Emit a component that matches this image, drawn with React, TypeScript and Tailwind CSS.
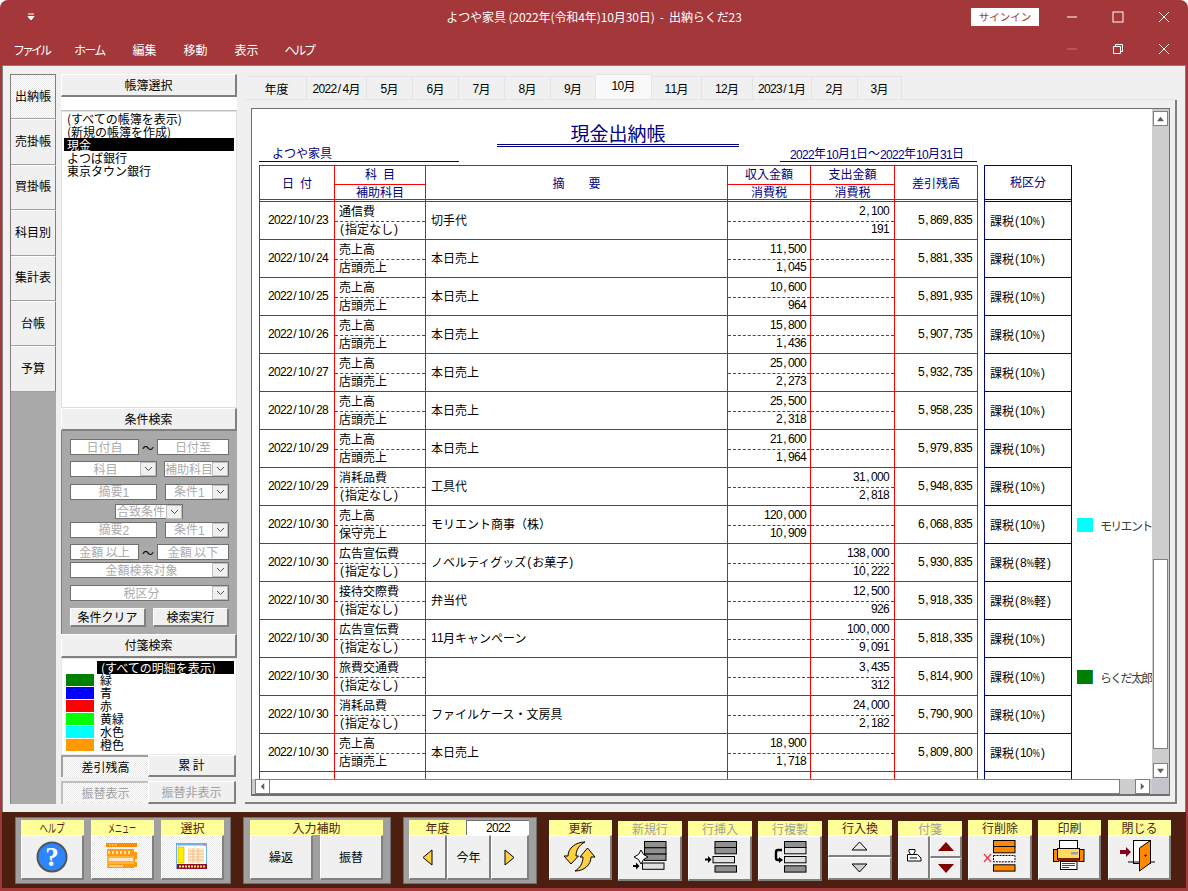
import React from "react";

const Txt = ({ s }: { s: string }) => (
  <>
    {s.split(/([0-9/,%()]+)/).map((p, i) =>
      /^[0-9/,%()]+$/.test(p) ? (
        <span key={i} className="font-['Liberation_Sans',sans-serif]">
          {p.split("").map((c, j) => (
            <span key={j} className={`inline-block text-center translate-y-[1px] ${c === "%" ? "w-[8px] text-[10px] scale-x-[.8]" : "w-[6px] text-[12px]"}`}>{c}</span>
          ))}
        </span>
      ) : (
        <span key={i}>{p}</span>
      )
    )}
  </>
);

const bevel = "border border-t-white border-l-white border-r-2 border-b-2 border-r-[#808080] border-b-[#808080] bg-[#f0f0f0]";
const dither = "bg-[repeating-conic-gradient(#ffffff_0_25%,#e8e8e8_0_50%)] bg-[length:2px_2px]";

const Tri = ({ dir, c = "#606060", s = 7 }: { dir: "u" | "d" | "l" | "r"; c?: string; s?: number }) => {
  const p = { u: "0,7 4,2 8,7", d: "0,2 8,2 4,7", l: "6,0 6,8 2,4", r: "2,0 2,8 6,4" }[dir];
  return (
    <svg width={s} height={s} viewBox="0 0 8 8"><polygon points={p} fill={c} /></svg>
  );
};

const tabs: [string, number][] = [["年度", 60], ["2022/4月", 60], ["5月", 46], ["6月", 46], ["7月", 46], ["8月", 46], ["9月", 45], ["10月", 56], ["11月", 50], ["12月", 51], ["2023/1月", 59], ["2月", 46], ["3月", 44]];

type R = [string, string, string, string, string, string, string, string, string, string, number?];
const rows: R[] = [
  ["2022/10/23", "通信費", "(指定なし)", "切手代", "", "", "2,100", "191", "5,869,835", "課税(10%)"],
  ["2022/10/24", "売上高", "店頭売上", "本日売上", "11,500", "1,045", "", "", "5,881,335", "課税(10%)"],
  ["2022/10/25", "売上高", "店頭売上", "本日売上", "10,600", "964", "", "", "5,891,935", "課税(10%)"],
  ["2022/10/26", "売上高", "店頭売上", "本日売上", "15,800", "1,436", "", "", "5,907,735", "課税(10%)"],
  ["2022/10/27", "売上高", "店頭売上", "本日売上", "25,000", "2,273", "", "", "5,932,735", "課税(10%)"],
  ["2022/10/28", "売上高", "店頭売上", "本日売上", "25,500", "2,318", "", "", "5,958,235", "課税(10%)"],
  ["2022/10/29", "売上高", "店頭売上", "本日売上", "21,600", "1,964", "", "", "5,979,835", "課税(10%)"],
  ["2022/10/29", "消耗品費", "(指定なし)", "工具代", "", "", "31,000", "2,818", "5,948,835", "課税(10%)"],
  ["2022/10/30", "売上高", "保守売上", "モリエント商事（株）", "120,000", "10,909", "", "", "6,068,835", "課税(10%)", 1],
  ["2022/10/30", "広告宣伝費", "(指定なし)", "ノベルティグッズ(お菓子)", "", "", "138,000", "10,222", "5,930,835", "課税(8%軽)"],
  ["2022/10/30", "接待交際費", "(指定なし)", "弁当代", "", "", "12,500", "926", "5,918,335", "課税(8%軽)"],
  ["2022/10/30", "広告宣伝費", "(指定なし)", "11月キャンペーン", "", "", "100,000", "9,091", "5,818,335", "課税(10%)"],
  ["2022/10/30", "旅費交通費", "(指定なし)", "", "", "", "3,435", "312", "5,814,900", "課税(10%)", 2],
  ["2022/10/30", "消耗品費", "(指定なし)", "ファイルケース・文房具", "", "", "24,000", "2,182", "5,790,900", "課税(10%)"],
  ["2022/10/30", "売上高", "店頭売上", "本日売上", "18,900", "1,718", "", "", "5,809,800", "課税(10%)"],
];

const grid = "grid grid-cols-[75px_91px_302px_83px_84px_83px] w-[719px] shrink-0 border-l border-[#ff0000]";
const cell = "border-r border-b border-[#ff0000] flex items-center pb-[2px]";
const dash = "border-b border-dashed border-[#ff0000]";

const Split = ({ a, b, right, pr }: { a: string; b: string; right?: boolean; pr?: string }) => (
  <div className="border-r border-b border-[#ff0000] flex flex-col">
    <div className={`h-[20px] flex items-center ${dash} ${right ? "justify-end pb-[2px]" : "pl-[4px] pb-[2px]"} ${pr ?? ""} shrink-0`}><Txt s={a} /></div>
    <div className={`h-[17px] flex items-center ${right ? "justify-end pb-[4px]" : "pl-[4px] pb-[4px]"} ${pr ?? ""}`}><Txt s={b} /></div>
  </div>
);

const Row = ({ r }: { r: R }) => (
  <div className="flex h-[38px] shrink-0">
    <div className={grid}>
      <div className={`${cell} justify-center pl-[2px]`}><Txt s={r[0]} /></div>
      <Split a={r[1]} b={r[2]} />
      <div className={`${cell} pl-[5px]`}><Txt s={r[3]} /></div>
      <Split a={r[4]} b={r[5]} right pr="pr-[4px]" />
      <Split a={r[6]} b={r[7]} right pr="pr-[5px]" />
      <div className={`${cell} justify-end pr-[5px]`}><Txt s={r[8]} /></div>
    </div>
    <div className="ml-[6px] w-[88px] shrink-0 border-x border-b border-[#000080] flex items-center pl-[5px] whitespace-nowrap"><Txt s={r[9]} /></div>
    {r[10] ? (
      <div className="ml-[5px] flex items-center w-[75px] shrink-0 overflow-hidden whitespace-nowrap text-[#404040]">
        <div className={`w-[16px] h-[14px] shrink-0 ${r[10] === 1 ? "bg-[#00ffff]" : "bg-[#008000] border-r border-[#008b8b]"}`} />
        <span className="ml-[7px] tracking-[-1.7px]">{r[10] === 1 ? "モリエント商事" : "らくだ太郎"}</span>
      </div>
    ) : null}
  </div>
);

const Field = ({ t, w, h = "h-[16px]", ml = "", arrow, cls = "" }: { t: string; w: string; h?: string; ml?: string; arrow?: boolean; cls?: string }) => (
  <div className={`${w} ${h} ${ml} ${cls} bg-white border border-[#707070] text-[#ababab] flex items-center`}>
    <span className="flex-1 min-w-0 text-center whitespace-nowrap overflow-hidden pb-[2px]"><Txt s={t} /></span>
    {arrow ? (
      <span className="w-[16px] h-[14px] shrink-0 bg-[#f0f0f0] border border-[#c0c0c0] flex items-center justify-center">
        <svg width="9" height="6" viewBox="0 0 9 6"><path d="M1 1l3.5 3.5L8 1" fill="none" stroke="#505050" /></svg>
      </span>
    ) : null}
  </div>
);

const Lbl = ({ t, off, w = "", nar = "" }: { t: string; off?: boolean; w?: string; nar?: string }) => (
  <div className={`${w} h-[15px] shrink-0 bg-[#ffff99] flex items-center justify-center ${off ? "text-[#a0a0a0]" : "text-[#4d1f10]"}`}>
    <span className={`inline-block ${nar}`}>{t}</span>
  </div>
);

const Tool = ({ t, off, w, ml, top = "mt-[9px]", children }: { t: string; off?: boolean; w: string; ml: string; top?: string; children: React.ReactNode }) => (
  <div className={`${w} ${ml} ${top} flex flex-col shrink-0`}>
    <Lbl t={t} off={off} />
    <div className={`${bevel} flex-1 h-[44px] flex items-center justify-center overflow-hidden`}>{children}</div>
  </div>
);

const gr = "#909090";
const Box = ({ x, y, w = 21.5, h = 6.3, f = gr }: { x: number; y: number; w?: number; h?: number; f?: string }) => (
  <rect x={x + 0.5} y={y + 0.5} width={w} height={h} fill={f} stroke="#000" />
);
const Arr = ({ x, y }: { x: number; y: number }) => (
  <path d={`M${x - 3} ${y - 1}h3v-2.5l3.5 3.5-3.5 3.5v-2.5h-3z`} fill="#000" />
);
const Svg = ({ children }: { children: React.ReactNode }) => (
  <svg width="60" height="42" viewBox="0 0 60 42" className="shrink-0">{children}</svg>
);

const Mid = ({ t, cls = "" }: { t: string; cls?: string }) => (
  <div className={`${bevel} ${cls} flex items-center justify-center pb-[2px]`}><Txt s={t} /></div>
);

const hd = "border-r border-[#ff0000] flex items-center justify-center pb-[3px]";
const hdTop = "h-[19px] border-b border-[#ff0000] flex items-center justify-center pb-[3px]";
const hdBot = "flex-1 flex items-center justify-center pb-[3px]";

export default function App() {
  return (
    <div className="w-[1188px] h-[891px] bg-[#a4373a] flex flex-col overflow-hidden rounded-t-[8px] font-['Noto_Sans_CJK_JP','Liberation_Sans',sans-serif] text-[12px] leading-[13px] text-black">
      {/* Title */}
      <div className="h-[33px] shrink-0 grid grid-cols-[1fr_auto_1fr] items-center text-white">
        <div className="pl-[27px]">
          <svg width="8" height="8" viewBox="0 0 8 8"><path d="M1 1h6M1 3.5h6L4 7z" stroke="#fff" fill="#fff" strokeWidth="1" /></svg>
        </div>
        <div className="whitespace-pre tracking-[-0.1px]">よつや家具 (2022年(令和4年)10月30日)  -  出納らくだ23</div>
        <div className="flex items-center justify-end pr-[1px]">
          <div className="w-[68px] h-[18px] bg-white text-[#a4373a] text-[10.5px] flex items-center justify-center mr-[10px]">サインイン</div>
          <div className="w-[46px] flex justify-center"><svg width="12" height="12" viewBox="0 0 12 12"><path d="M1 6h10" stroke="#fff" /></svg></div>
          <div className="w-[46px] flex justify-center"><svg width="12" height="12" viewBox="0 0 12 12"><rect x="1" y="1" width="10" height="10" fill="none" stroke="#fff" /></svg></div>
          <div className="w-[46px] flex justify-center"><svg width="12" height="12" viewBox="0 0 12 12"><path d="M1 1l10 10M11 1L1 11" stroke="#fff" /></svg></div>
        </div>
      </div>
      {/* Menu */}
      <div className="h-[32px] shrink-0 flex items-center pl-[13px] text-white">
        <span className="tracking-[-3px]">ファイル</span>
        <span className="ml-[25px] tracking-[-1.7px]">ホーム</span>
        <span className="ml-[28px]">編集</span>
        <span className="ml-[27px]">移動</span>
        <span className="ml-[27px]">表示</span>
        <span className="ml-[26px] tracking-[-2.3px]">ヘルプ</span>
        <div className="ml-auto flex items-center pr-[1px]">
          <div className="w-[46px] flex justify-center"><svg width="12" height="12" viewBox="0 0 12 12"><path d="M1 6h10" stroke="#d87070" /></svg></div>
          <div className="w-[46px] flex justify-center"><svg width="12" height="12" viewBox="0 0 12 12"><path d="M3.5 3V1.5h7v7H9M1.5 3.5h7v7h-7z" fill="none" stroke="#fff" /></svg></div>
          <div className="w-[46px] flex justify-center"><svg width="12" height="12" viewBox="0 0 12 12"><path d="M1 1l10 10M11 1L1 11" stroke="#fff" /></svg></div>
        </div>
      </div>
      {/* Body */}
      <div className="h-[747px] shrink-0 mx-[2px] bg-[#f0f0f0] border-t border-x border-[#808080] pl-[7px] pt-[8px] flex">
        {/* Side tabs */}
        <div className="w-[46px] h-[730px] bg-[#a9a9a9] border-l border-[#808080] flex flex-col shrink-0">
          {["出納帳", "売掛帳", "買掛帳", "科目別", "集計表", "台帳", "予算"].map((t, i) => (
            <div key={t} className={`h-[45.4px] shrink-0 flex items-center justify-center pb-[3px] border-b border-r border-b-[#a0a0a0] border-r-[#808080] border-t ${i === 0 ? `${dither} border-t-[#808080]` : "bg-[#f0f0f0] border-t-white"}`}>{t}</div>
          ))}
        </div>
        {/* Middle */}
        <div className="w-[176px] ml-[5px] h-[730px] flex flex-col shrink-0">
          <Mid t="帳簿選択" cls="h-[23px]" />
          <div className="h-[14px] bg-white border-b border-[#c0c0c0]" />
          <div className="h-[297px] bg-white border border-[#e0e0e0] px-[2px] whitespace-nowrap">
            <div className="pl-[3px] h-[13px]">(すべての帳簿を表示)</div>
            <div className="pl-[3px] h-[13px]">(新規の帳簿を作成)</div>
            <div className="pl-[3px] h-[13px] bg-black text-white">現金</div>
            <div className="pl-[3px] h-[13px]">よつば銀行</div>
            <div className="pl-[3px] h-[13px]">東京タウン銀行</div>
          </div>
          <Mid t="条件検索" cls="h-[23px]" />
          <div className="h-[203px] bg-[#a9a9a9] border-l border-[#808080] pl-[8px] pt-[8px] flex flex-col">
            <div className="flex items-center">
              <Field t="日付自" w="w-[69px]" />
              <span className="w-[18px] text-center">～</span>
              <Field t="日付至" w="w-[72px]" />
            </div>
            <div className="flex mt-[6px]">
              <Field t="科目" w="w-[87px]" arrow />
              <Field t="補助科目" w="w-[65px]" ml="ml-[7px]" arrow />
            </div>
            <div className="flex mt-[7px]">
              <Field t="摘要1" w="w-[87px]" />
              <Field t="条件1" w="w-[64px]" ml="ml-[8px]" arrow />
            </div>
            <Field t="合致条件" w="w-[68px]" ml="ml-[45px]" cls="mt-[4px]" arrow h="h-[15px]" />
            <div className="flex mt-[3px]">
              <Field t="摘要2" w="w-[87px]" />
              <Field t="条件1" w="w-[64px]" ml="ml-[8px]" arrow />
            </div>
            <div className="flex items-center mt-[6px]">
              <Field t="金額 以上" w="w-[69px]" />
              <span className="w-[18px] text-center">～</span>
              <Field t="金額 以下" w="w-[72px]" />
            </div>
            <Field t="金額検索対象" w="w-[159px]" cls="mt-[2px]" arrow />
            <Field t="税区分" w="w-[159px]" cls="mt-[7px]" arrow />
            <div className="flex mt-[7px]">
              <Mid t="条件クリア" cls="w-[76px] h-[19px]" />
              <Mid t="検索実行" cls="w-[76px] h-[19px] ml-[7px]" />
            </div>
          </div>
          <Mid t="付箋検索" cls="h-[24px]" />
          <div className="h-[97px] bg-white border border-[#e8e8e8] pl-[4px] pt-[2px] flex flex-col">
            <div className="h-[13px] mb-[-1px] pl-[31px] pr-[2px]"><div className="bg-black text-white pl-[4px] h-[13px] whitespace-nowrap">(すべての明細を表示)</div></div>
            {[["緑", "bg-[#008000]"], ["青", "bg-[#0000ff]"], ["赤", "bg-[#ff0000]"], ["黄緑", "bg-[#00ff00]"], ["水色", "bg-[#00ffff]"], ["橙色", "bg-[#ff9900]"]].map(([n, c]) => (
              <div key={n} className="h-[13px] flex items-center">
                <div className={`w-[28px] h-[12px] ${c}`} />
                <span className="ml-[6px] pb-[1px]">{n}</span>
              </div>
            ))}
          </div>
          <div className="flex h-[22px]">
            <div className={`w-[87px] ${dither} border-t-2 border-l-2 border-[#a0a0a0] flex items-center justify-center pb-[2px]`}>差引残高</div>
            <Mid t="累 計" cls="w-[88px]" />
          </div>
          <div className="flex h-[23px] mt-[4px] text-[#a0a0a0]">
            <div className={`w-[87px] ${dither} border-t-2 border-l-2 border-[#c0c0c0] flex items-center justify-center pb-[2px]`}>振替表示</div>
            <Mid t="振替非表示" cls="w-[88px]" />
          </div>
        </div>
        {/* Right */}
        <div className="w-[932px] ml-[8px] h-[730px] flex flex-col shrink-0">
          <div className="h-[26px] shrink-0 flex items-end pl-[2px] border-b border-[#e4e4e4]">
            {tabs.map(([t, w]) => (
              <div key={t} style={{ width: w }} className={`border-r border-t border-[#e4e4e4] flex items-center justify-center shrink-0 ${t === "10月" ? "h-[25px] bg-[#f9f9f9] pb-[3px]" : "h-[23px]"}`}><Txt s={t} /></div>
            ))}
          </div>
          <div className="flex-1 border-r-2 border-b-2 border-[#808080] pt-[8px] pl-[6px]">
            <div className="w-[919px] h-[688px] border border-[#707070] border-b-2 bg-white flex flex-col">
              <div className="flex h-[670px] shrink-0">
                <div className="w-[900px] h-[670px] overflow-hidden pl-[7px] flex flex-col">
                  <div className="h-[53px] shrink-0 flex items-end text-[#000080]">
                    <div className="w-[200px] border-b border-[#000080] pl-[13px] h-[16px] leading-[14px]">よつや家具</div>
                    <div className="w-[242px] ml-[38px] mb-[15px] border-b-[3px] border-double border-[#000080] text-center text-[19px] leading-[23px]">現金出納帳</div>
                    <div className="w-[197px] ml-[41px] border-b border-[#000080] pl-[10px] h-[16px] leading-[13px] whitespace-nowrap"><Txt s="2022年10月1日～2022年10月31日" /></div>
                  </div>
                  <div className="flex mt-[3px] h-[37px] shrink-0 text-[#000080]">
                    <div className="grid grid-cols-[75px_91px_302px_83px_84px_83px] w-[719px] shrink-0 border-t border-l border-[#ff0000] border-b-[3px] [border-bottom-style:double]">
                      <div className={hd}>日&ensp;付</div>
                      <div className="border-r border-[#ff0000] flex flex-col"><div className={hdTop}>科&ensp;目</div><div className={hdBot}>補助科目</div></div>
                      <div className={hd}>摘　　要</div>
                      <div className="border-r border-[#ff0000] flex flex-col"><div className={hdTop}>収入金額</div><div className={hdBot}>消費税</div></div>
                      <div className="border-r border-[#ff0000] flex flex-col"><div className={hdTop}>支出金額</div><div className={hdBot}>消費税</div></div>
                      <div className={hd}>差引残高</div>
                    </div>
                    <div className="ml-[6px] w-[88px] shrink-0 border-t border-x border-[#000080] border-b-[3px] [border-bottom-style:double] flex items-center justify-center pb-[3px]">税区分</div>
                  </div>
                  {rows.map((r, i) => <Row key={i} r={r} />)}
                  <div className="flex h-[38px] shrink-0">
                    <div className={grid}>
                      <div className={cell} /><div className={cell} /><div className={cell} /><div className={cell} /><div className={cell} /><div className={cell} />
                    </div>
                    <div className="ml-[6px] w-[88px] shrink-0 border-x border-[#000080]" />
                  </div>
                </div>
                <div className="w-[17px] bg-[#cdcdcd] flex flex-col items-center pt-[2px] shrink-0">
                  <div className="w-[15px] h-[15px] bg-white border border-[#808080] flex items-center justify-center"><Tri dir="u" /></div>
                  <div className="w-[15px] h-[190px] mt-[433px] bg-white border border-[#808080]" />
                  <div className="w-[15px] h-[15px] mt-[14px] bg-white border border-[#808080] flex items-center justify-center"><Tri dir="d" /></div>
                </div>
              </div>
              <div className="flex-1 flex bg-[#cdcdcd]">
                <div className="w-[900px] flex items-center pl-[3px]">
                  <div className="w-[15px] h-[15px] bg-white border border-[#808080] flex items-center justify-center"><Tri dir="l" /></div>
                  <div className="w-[851px] h-[15px] ml-[-1px] bg-white border border-[#808080]" />
                  <div className="w-[15px] h-[15px] ml-[15px] bg-white border border-[#808080] flex items-center justify-center"><Tri dir="r" /></div>
                </div>
                <div className="w-[17px] bg-[#c4c4cc]" />
              </div>
            </div>
          </div>
        </div>
      </div>
      {/* Toolbar */}
      <div className="h-[76px] shrink-0 mx-[2px] bg-[#4d1f10] pl-[13px] flex items-start">
        <div className="w-[216px] h-[67px] mt-[5px] bg-[#a0a0a0] border border-[#707070] pl-[5px] pt-[2px] flex gap-[7px] shrink-0">
          <div className="w-[63px] flex flex-col">
            <Lbl t="ヘルプ" nar="scale-x-[.7]" />
            <div className={`${bevel} h-[45px] flex items-center justify-center`}>
              <svg width="32" height="32" viewBox="0 0 32 32"><circle cx="16" cy="16" r="14.5" fill="#2e86ff" stroke="#555" strokeWidth="2" /><text x="16" y="25" textAnchor="middle" fontFamily="Liberation Serif, serif" fontWeight="bold" fontSize="27" fill="#fff">?</text></svg>
            </div>
          </div>
          <div className="w-[63px] flex flex-col">
            <Lbl t="メニュー" nar="scale-x-[.58]" />
            <div className={`border border-t-white border-l-white border-r-2 border-b-2 border-r-[#808080] border-b-[#808080] ${dither} h-[45px] flex items-center justify-center`}>
              <svg width="32" height="28" viewBox="0 0 32 28">
                <rect x="0" y="0" width="31" height="4" fill="#ff8c00" /><path d="M3 2h8" stroke="#ffe0a0" strokeDasharray="2 1" />
                <rect x="1" y="6" width="27" height="7" fill="#ff9a10" /><path d="M3 8v3M7 8v3M11 8v3M15 8v3M19 8v3M23 8v3" stroke="#ffe9b0" strokeWidth="2" />
                <rect x="1" y="13" width="27" height="12" fill="#ffb040" /><rect x="3" y="15" width="24" height="3" fill="#ffe8c8" /><rect x="2" y="21" width="26" height="4" fill="#ff9a10" />
                <path d="M3 23h14" stroke="#fff" /><rect x="28" y="9" width="3" height="15" fill="#ff9a10" /><rect x="29" y="16" width="2" height="3" fill="#ffe8c8" />
              </svg>
            </div>
          </div>
          <div className="w-[63px] flex flex-col">
            <Lbl t="選択" />
            <div className={`border border-t-white border-l-white border-r-2 border-b-2 border-r-[#808080] border-b-[#808080] ${dither} h-[45px] flex items-center justify-center`}>
              <svg width="32" height="28" viewBox="0 0 32 28">
                <rect x="0.5" y="0.5" width="30" height="25" fill="#ffffff" stroke="#70b0e8" />
                <rect x="0" y="0" width="31" height="2.5" fill="#70b0e8" /><rect x="27" y="0" width="3" height="2.5" fill="#ff7090" />
                <rect x="2" y="4" width="6" height="16" fill="#ffee00" stroke="#c0a000" strokeWidth="0.5" />
                <rect x="12" y="5" width="16" height="15" fill="#ffecd0" /><path d="M12 8h16M12 11h16M12 14h16M12 17h16M17 5v15M22 5v15" stroke="#f0b070" strokeWidth="0.7" />
                <rect x="1" y="21" width="30" height="5" fill="#8b1030" /><path d="M3 23.5h26" stroke="#ffdd60" strokeWidth="2" strokeDasharray="2 1" />
              </svg>
            </div>
          </div>
        </div>
        <div className="w-[148px] h-[67px] mt-[5px] ml-[12px] bg-[#a0a0a0] border border-[#707070] pl-[6px] pt-[2px] shrink-0">
          <Lbl t="入力補助" w="w-[133px]" />
          <div className="flex gap-[7px]">
            <Mid t="繰返" cls="w-[63px] h-[45px]" />
            <Mid t="振替" cls="w-[63px] h-[45px]" />
          </div>
        </div>
        <div className="w-[134px] h-[67px] mt-[5px] ml-[12px] bg-[#a0a0a0] border border-[#707070] pl-[5px] pt-[2px] shrink-0">
          <div className="flex h-[15px]">
            <Lbl t="年度" w="w-[57px]" />
            <div className="w-[63px] bg-white border-t border-l border-[#707070] flex items-center justify-center pb-[2px]"><Txt s="2022" /></div>
          </div>
          <div className="flex">
            <div className={`${bevel} w-[38px] h-[45px] flex items-center justify-center`}><svg width="11" height="17" viewBox="0 0 11 17"><polygon points="10,1 10,16 1,8.5" fill="#ffd040" stroke="#000" /></svg></div>
            <Mid t="今年" cls="w-[44px] h-[45px]" />
            <div className={`${bevel} w-[38px] h-[45px] flex items-center justify-center`}><svg width="11" height="17" viewBox="0 0 11 17"><polygon points="1,1 1,16 10,8.5" fill="#ffd040" stroke="#000" /></svg></div>
          </div>
        </div>
        <Tool t="更新" w="w-[63px]" ml="ml-[12px]" top="mt-[8px]">
          <Svg>
            <path d="M21 28L14 20H18C18 12 26 6 35 6C29 9 26 14 26 20H28.5Z" fill="#ffd040" stroke="#000" />
            <path d="M37.5 12L45 21H41C41 29 34 35 25 35C30 32 33 27 33 21H30Z" fill="#ffd040" stroke="#000" />
          </Svg>
        </Tool>
        <Tool t="新規行" off w="w-[64px]" ml="ml-[6px]">
          <Svg>
            <Box x={24} y={4} /><Box x={24} y={10.3} /><Box x={24} y={16.6} />
            <polygon points="21,13 23.5,17.5 28,20 23.5,22.5 21,27 18.5,22.5 14,20 18.5,17.5" fill="#fff" stroke="#000" />
            <Box x={22} y={25.5} f="#e0e0e0" /><Arr x={16} y={29} />
          </Svg>
        </Tool>
        <Tool t="行挿入" off w="w-[64px]" ml="ml-[6px]">
          <Svg>
            <Box x={24.5} y={4} /><Box x={24.5} y={10} />
            <Box x={22.5} y={19} f="#e0e0e0" /><Arr x={18} y={22.5} /><Box x={24.5} y={28.3} />
          </Svg>
        </Tool>
        <Tool t="行複製" off w="w-[64px]" ml="ml-[6px]">
          <Svg>
            <Box x={24} y={4} /><Box x={24} y={10} f="#e0e0e0" /><Box x={24} y={19} f="#e0e0e0" /><Box x={24} y={28.3} />
            <path d="M22 13H18Q16 13 16 15V21Q16 23 18 23H19" stroke="#000" strokeWidth="2.4" fill="none" /><path d="M19 20l4 3-4 3z" fill="#000" />
          </Svg>
        </Tool>
        <div className="w-[64px] ml-[6px] mt-[8px] flex flex-col shrink-0">
          <Lbl t="行入換" />
          <div className={`${bevel} h-[22px] flex items-center justify-center`}><svg width="17" height="10" viewBox="0 0 17 10"><polygon points="8.5,1 16,9 1,9" fill="#e8e8e8" stroke="#000" /></svg></div>
          <div className={`${bevel} h-[23px] flex items-center justify-center`}><svg width="17" height="10" viewBox="0 0 17 10"><polygon points="1,1 16,1 8.5,9" fill="#d0d0d0" stroke="#000" /></svg></div>
        </div>
        <div className="w-[64px] ml-[6px] mt-[9px] flex flex-col shrink-0">
          <Lbl t="付箋" off />
          <div className="flex h-[44px]">
            <div className={`${bevel} w-[32px] flex items-center justify-center pb-[5px]`}>
              <svg width="16" height="14" viewBox="0 0 16 14"><path d="M1.5 13V6.5H4M1.5 13H15V10L11.5 6.5H8M4 6.5V5L3 4V1.5H9V4L8 5V6.5M4 6.5H8M11 10H4" fill="#fff" stroke="#000" /></svg>
            </div>
            <div className="w-[32px] flex flex-col">
              <div className={`${bevel} h-[22px] flex items-center justify-center`}><svg width="16" height="9" viewBox="0 0 16 9"><polygon points="8,0 16,9 0,9" fill="#800000" /></svg></div>
              <div className={`${bevel} h-[22px] flex items-center justify-center`}><svg width="16" height="9" viewBox="0 0 16 9"><polygon points="0,0 16,0 8,9" fill="#800000" /></svg></div>
            </div>
          </div>
        </div>
        <Tool t="行削除" w="w-[64px]" ml="ml-[6px]" top="mt-[8px]">
          <Svg>
            <Box x={23} y={4} f="#ff8800" /><Box x={23} y={10} f="#ff8800" />
            <rect x="23.5" y="19.5" width="21.5" height="6.3" fill="#fff" stroke="#000" strokeDasharray="2 1" />
            <Box x={23} y={28.3} f="#ff8800" />
            <path d="M14 18l7 8M21 18l-7 8" stroke="#ff3040" strokeWidth="1.2" />
          </Svg>
        </Tool>
        <Tool t="印刷" w="w-[63px]" ml="ml-[6px]" top="mt-[8px]">
          <Svg>
            <rect x="20.5" y="4.5" width="18" height="9" fill="#fff" stroke="#000" />
            <rect x="14.5" y="13.5" width="5" height="12" fill="#ff8800" stroke="#000" /><rect x="40" y="13.5" width="5" height="12" fill="#ff8800" stroke="#000" />
            <rect x="18.5" y="12.5" width="22" height="11" fill="#ffdd60" stroke="#000" />
            <rect x="19" y="22" width="21" height="3.5" fill="#802000" />
            <rect x="32" y="16" width="7" height="2.5" fill="#a0a0a0" />
            <rect x="21.5" y="25.5" width="16.5" height="8" fill="#fff" stroke="#000" />
            <path d="M23 27.5h13M23 29.5h13M23 31.5h7" stroke="#e00020" />
          </Svg>
        </Tool>
        <Tool t="閉じる" w="w-[63px]" ml="ml-[7px]" top="mt-[8px]">
          <Svg>
            <path d="M11 14h6v-3l5 5-5 5v-3h-6z" fill="#800020" />
            <rect x="24.5" y="4.5" width="17" height="23" fill="#fff" stroke="#000" />
            <path d="M19 26h27" stroke="#000" />
            <polygon points="41.5,4.5 30.5,12 30.5,35 41.5,27" fill="#ff8800" stroke="#000" />
            <path d="M35 19.5h3M36.5 18v3" stroke="#c00000" />
          </Svg>
        </Tool>
      </div>
    </div>
  );
}
